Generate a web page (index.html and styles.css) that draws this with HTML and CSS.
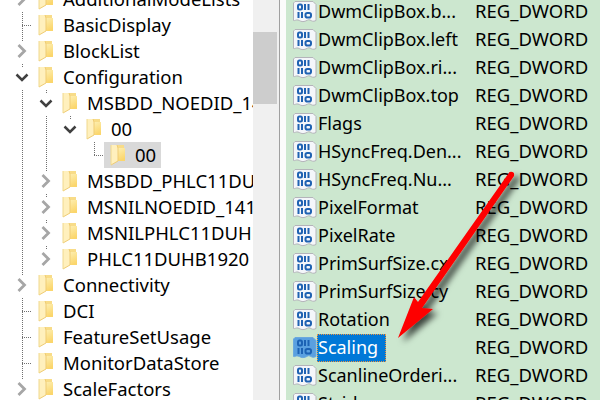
FILE: index.html
```html
<!DOCTYPE html>
<html lang="en">
<head>
<meta charset="utf-8">
<title>Registry Editor</title>
<link rel="stylesheet" href="styles.css">
</head>
<body>
<svg class="defs" width="0" height="0" aria-hidden="true">
  <defs>
    <linearGradient id="fg" x1="0" y1="0" x2="0.3" y2="1">
      <stop offset="0" stop-color="#fdeeb0"/>
      <stop offset="1" stop-color="#fbd66c"/>
    </linearGradient>
    <symbol id="folder" viewBox="0 0 16 22">
      <path d="M6 1h8v15H7z" fill="#f8dc88"/>
      <path d="M8 4h7v13H8z" fill="url(#fg)"/>
      <path d="M1 1h6l1 3v13l-7 4z" fill="#fff0bd"/>
      <path d="M1 21l7-4V4L7 1" fill="none" stroke="#efcc74" stroke-width="1"/>
      <path d="M1 1v20" stroke="#f0d88e" stroke-width="1"/>
    </symbol>
    <symbol id="reg" viewBox="0 0 24 22">
      <path class="reg-page" d="M2 .5h18l3 3v16c-3 1.500-4 .5-6-.5s-3 1-6 1.500-4-1-6-1.500-3 1-4.500.5L.5 2z"/>
      <g class="reg-bits">
        <rect x="5" y="3.500" width="4" height="5" rx="1.500"/>
        <path d="M12 3v6M15.500 3v6"/>
        <path d="M5.500 11v6M9 11v6"/>
        <rect x="12.500" y="12" width="5.500" height="4.500" rx="1.800"/>
      </g>
    </symbol>
    <symbol id="open" viewBox="0 0 20 20">
      <path d="M1.500 7.500L7 13l5.500-5.500" fill="none" stroke="#404040" stroke-width="2.500"/>
    </symbol>
    <symbol id="closed" viewBox="0 0 20 20">
      <path d="M3.500 4L9.500 10l-6 6" fill="none" stroke="#a6a6a6" stroke-width="2.800"/>
    </symbol>
  </defs>
</svg>
<main class="window">
  <nav class="tree">
    <ul class="tree-list">
      <li class="node"><svg class="chev"><use href="#closed"/></svg><svg class="folder"><use href="#folder"/></svg><span class="label">AdditionalModeLists</span></li>
      <li class="node leaf through"><span class="chev"></span><svg class="folder"><use href="#folder"/></svg><span class="label">BasicDisplay</span></li>
      <li class="node"><svg class="chev"><use href="#closed"/></svg><svg class="folder"><use href="#folder"/></svg><span class="label">BlockList</span></li>
      <li class="node"><svg class="chev"><use href="#open"/></svg><svg class="folder"><use href="#folder"/></svg><span class="label">Configuration</span></li>
      <li class="node d1 trunk"><svg class="chev"><use href="#open"/></svg><svg class="folder"><use href="#folder"/></svg><span class="label">MSBDD_NOEDID_1414_0_0</span></li>
      <li class="node d2 trunk trunk2"><svg class="chev"><use href="#open"/></svg><svg class="folder"><use href="#folder"/></svg><span class="label">00</span></li>
      <li class="node d3 leaf trunk trunk2"><span class="chev"></span><span class="selected"><svg class="folder"><use href="#folder"/></svg><span class="label">00</span></span></li>
      <li class="node d1 trunk"><svg class="chev"><use href="#closed"/></svg><svg class="folder"><use href="#folder"/></svg><span class="label">MSBDD_PHLC11DUHB1920</span></li>
      <li class="node d1 trunk"><svg class="chev"><use href="#closed"/></svg><svg class="folder"><use href="#folder"/></svg><span class="label">MSNILNOEDID_1414_0_0</span></li>
      <li class="node d1 trunk"><svg class="chev"><use href="#closed"/></svg><svg class="folder"><use href="#folder"/></svg><span class="label">MSNILPHLC11DUHB1920</span></li>
      <li class="node d1 trunk"><svg class="chev"><use href="#closed"/></svg><svg class="folder"><use href="#folder"/></svg><span class="label">PHLC11DUHB1920</span></li>
      <li class="node"><svg class="chev"><use href="#closed"/></svg><svg class="folder"><use href="#folder"/></svg><span class="label">Connectivity</span></li>
      <li class="node leaf through"><span class="chev"></span><svg class="folder"><use href="#folder"/></svg><span class="label">DCI</span></li>
      <li class="node leaf through"><span class="chev"></span><svg class="folder"><use href="#folder"/></svg><span class="label">FeatureSetUsage</span></li>
      <li class="node leaf through"><span class="chev"></span><svg class="folder"><use href="#folder"/></svg><span class="label">MonitorDataStore</span></li>
      <li class="node"><svg class="chev"><use href="#closed"/></svg><svg class="folder"><use href="#folder"/></svg><span class="label">ScaleFactors</span></li>
    </ul>
  </nav>
  <div class="scrollbar"><div class="thumb"></div></div>
  <div class="divider"></div>
  <section class="values">
    <div class="row"><svg class="reg"><use href="#reg"/></svg><span class="name">DwmClipBox.b...</span><span class="type">REG_DWORD</span></div>
    <div class="row"><svg class="reg"><use href="#reg"/></svg><span class="name">DwmClipBox.left</span><span class="type">REG_DWORD</span></div>
    <div class="row"><svg class="reg"><use href="#reg"/></svg><span class="name">DwmClipBox.ri...</span><span class="type">REG_DWORD</span></div>
    <div class="row"><svg class="reg"><use href="#reg"/></svg><span class="name">DwmClipBox.top</span><span class="type">REG_DWORD</span></div>
    <div class="row"><svg class="reg"><use href="#reg"/></svg><span class="name">Flags</span><span class="type">REG_DWORD</span></div>
    <div class="row"><svg class="reg"><use href="#reg"/></svg><span class="name">HSyncFreq.Den...</span><span class="type">REG_DWORD</span></div>
    <div class="row"><svg class="reg"><use href="#reg"/></svg><span class="name">HSyncFreq.Nu...</span><span class="type">REG_DWORD</span></div>
    <div class="row"><svg class="reg"><use href="#reg"/></svg><span class="name">PixelFormat</span><span class="type">REG_DWORD</span></div>
    <div class="row"><svg class="reg"><use href="#reg"/></svg><span class="name">PixelRate</span><span class="type">REG_DWORD</span></div>
    <div class="row"><svg class="reg"><use href="#reg"/></svg><span class="name">PrimSurfSize.cx</span><span class="type">REG_DWORD</span></div>
    <div class="row"><svg class="reg"><use href="#reg"/></svg><span class="name">PrimSurfSize.cy</span><span class="type">REG_DWORD</span></div>
    <div class="row"><svg class="reg"><use href="#reg"/></svg><span class="name">Rotation</span><span class="type">REG_DWORD</span></div>
    <div class="row is-selected"><svg class="reg"><use href="#reg"/></svg><span class="name"><span class="highlight">Scaling</span></span><span class="type">REG_DWORD</span></div>
    <div class="row"><svg class="reg"><use href="#reg"/></svg><span class="name">ScanlineOrderi...</span><span class="type">REG_DWORD</span></div>
    <div class="row"><svg class="reg"><use href="#reg"/></svg><span class="name">Stride</span><span class="type">REG_DWORD</span></div>
  </section>
  <svg class="arrow" viewBox="0 0 600 400" aria-hidden="true">
    <defs>
      <filter id="sh" x="-30%" y="-30%" width="170%" height="170%">
        <feDropShadow dx="5" dy="4" stdDeviation="3" flood-color="#000" flood-opacity="0.7"/>
      </filter>
    </defs>
    <path d="M509.500 172q5.500-1 4.500 4L422 308l11 1-35 29 16-41 4 5z" fill="#fe0000" filter="url(#sh)"/>
  </svg>
</main>
</body>
</html>
```
FILE: styles.css
```css
* { box-sizing: border-box; }
html, body { margin: 0; height: 100%; }
body { width: 600px; height: 400px; overflow: hidden; background: #fff; font-family: "Noto Sans", "Open Sans", sans-serif; font-size: 18.5px; color: #000; }
.defs { position: absolute; }
.window { position: relative; display: flex; width: 600px; height: 400px; overflow: hidden; }

.tree { width: 253px; flex: none; overflow: hidden; background: #fff; }
.tree-list { list-style: none; margin: -14px 0 0; padding: 0; }
.node { --x: 22px; --dots: repeating-linear-gradient(#707070 0 1px, transparent 1px 2px); position: relative; display: flex; align-items: center; height: 26px; white-space: nowrap; padding-left: 15px; }
.d1 { --x: 46px; padding-left: 39px; }
.d2 { --x: 70px; padding-left: 63px; }
.d3 { --x: 94px; padding-left: 87px; }
.node::before { content: ""; position: absolute; left: var(--x); top: 0; width: 1px; height: 3px; background: var(--dots); }
.leaf::before { height: 13px; }
.leaf::after { content: ""; position: absolute; left: var(--x); top: 13px; width: 10px; height: 1px; background: repeating-linear-gradient(90deg, #707070 0 1px, transparent 1px 2px); }
.through::before { height: 26px; }
.trunk { background: var(--dots) 22px 0 / 1px 100% no-repeat; }
.trunk2 { background: var(--dots) 22px 0 / 1px 100% no-repeat, var(--dots) 46px 0 / 1px 100% no-repeat; }
.chev { width: 20px; height: 20px; flex: none; }
.folder { width: 16px; height: 22px; flex: none; margin-left: 3px; }
.label { margin-left: 9px; line-height: 26px; }
.selected { position: relative; z-index: 1; display: flex; align-items: center; height: 26px; width: 57px; margin-left: -3px; padding-left: 3px; background: #d9d9d9; }

.scrollbar { width: 26px; flex: none; background: #f0f0f0; padding: 32px 2px 0 0; }
.thumb { height: 72px; background: #cdcdcd; }
.divider { width: 7px; flex: none; background: #fbfbfb; border-left: 1px solid #a0a0a0; }

.values { flex: 1; background: #cce7cf; overflow: hidden; }
.row { --page: #f4f6fa; --edge: #b4b4ba; --bits: #1f62b2; display: flex; align-items: center; height: 28px; }
.row:first-child { margin-top: -2px; }
.reg { width: 24px; height: 22px; flex: none; margin-left: 7px; }
.reg-page { fill: var(--page); stroke: var(--edge); stroke-width: 1; }
.reg-bits { fill: none; stroke: var(--bits); stroke-width: 2; }
.name { width: 158px; flex: none; padding-left: 1px; font-size: 18px; line-height: 26px; margin-bottom: 2px; white-space: nowrap; overflow: hidden; }
.type { line-height: 26px; margin-bottom: 2px; white-space: nowrap; }
.is-selected { --page: #5aa0e0; --edge: #6aa8de; --bits: #1c62b4; }
.is-selected .name { margin-bottom: 0; padding-left: 0; }
.highlight { display: block; width: 69px; padding: 0 0 2px 1px; background: #0078d7; color: #fff; outline: 1px dotted #f0963c; outline-offset: -1px; }

.arrow { position: absolute; left: 0; top: 0; width: 600px; height: 400px; pointer-events: none; }
```
